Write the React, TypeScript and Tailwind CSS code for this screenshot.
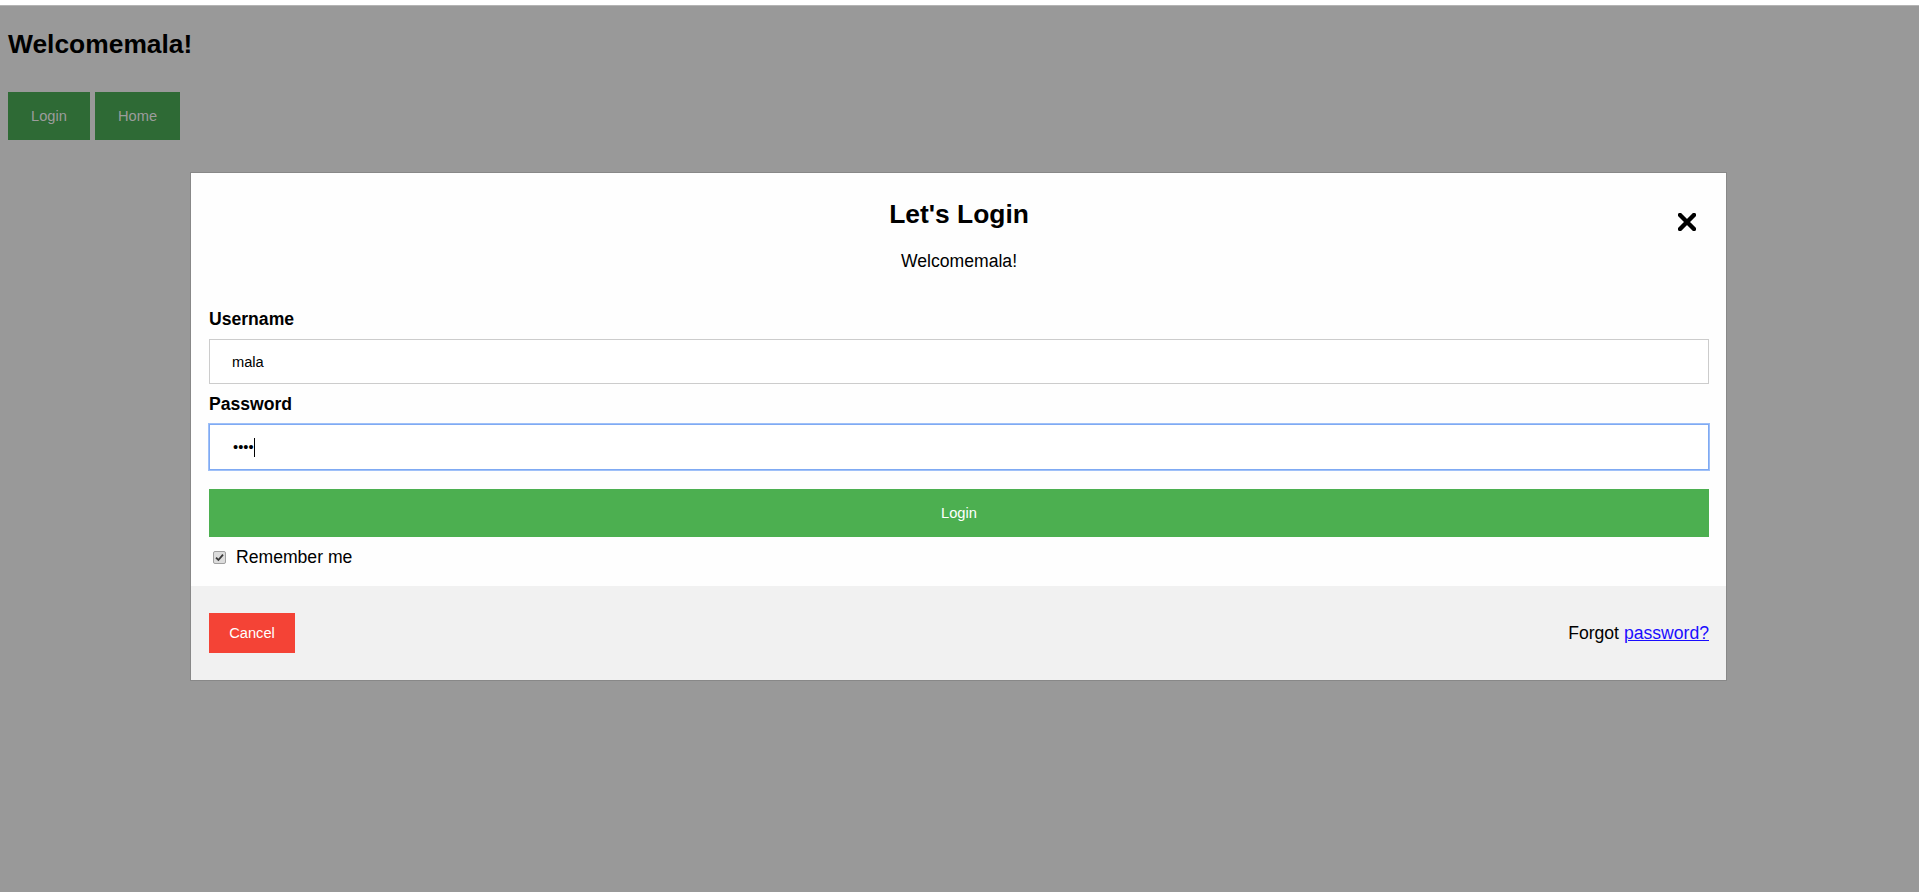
import { useState } from "react";

function CloseIcon() {
    return (
        <svg width="18" height="18" viewBox="0 0 18 18">
            <path d="M2 2 L16 16 M16 2 L2 16" stroke="#000" strokeWidth="4.4" strokeLinecap="square" />
        </svg>
    );
}

function Checkbox() {
    return (
        <span className="ml-[4px] w-[13px] h-[13px] rounded-[2px] border border-[#a0a0a0] bg-[#dcdcdc] flex items-center justify-center">
            <svg width="9" height="9" viewBox="0 0 9 9">
                <path d="M1 4.6 L3.4 7 L8 1.6" stroke="#3a3a3a" strokeWidth="1.8" fill="none" />
            </svg>
        </span>
    );
}

export default function App() {
    const [username] = useState("mala");

    return (
        <div className="min-h-screen flex flex-col bg-white font-['Liberation_Sans',Arial,sans-serif] text-black">
            <div className="h-[6px] bg-white border-b border-[#b4b4b4]"></div>
            <div className="flex-1 bg-[#999999] pt-[23px] px-[8px] pb-[40px]">
                <h1 className="text-[26.4px] leading-[30px] font-bold text-black">Welcome{username}!</h1>
                <div className="mt-[33px] flex gap-[5px]">
                    <button className="w-[82px] h-[48px] bg-[#2e6a35] text-[#9c9c9c] text-[14.67px]">Login</button>
                    <button className="w-[85px] h-[48px] bg-[#2e6a35] text-[#9c9c9c] text-[14.67px]">Home</button>
                </div>

                <div className="relative mt-[32px] ml-[182px] w-[1537px] border border-[#888888] bg-[#fefefe]">
                    <div className="pl-[18px] pr-[17px] pt-[26px]">
                        <h2 className="text-center text-[26.4px] leading-[30px] font-bold">Let's Login</h2>
                        <p className="mt-[22px] text-center text-[17.6px] leading-[20px]">Welcome{username}!</p>
                        <button className="absolute right-[30px] top-[40px]" aria-label="Close">
                            <CloseIcon />
                        </button>

                        <label className="block mt-[38px] text-[17.6px] leading-[20px] font-bold">Username</label>
                        <input
                            readOnly
                            value={username}
                            className="mt-[10px] block w-full h-[45px] border border-[#cccccc] bg-white px-[22px] text-[14.67px] outline-none"
                        />
                        <label className="block mt-[10px] text-[17.6px] leading-[20px] font-bold">Password</label>
                        <div className="mt-[10px] h-[46px] border border-[#7faaf3] shadow-[0_0_0_1px_#9fc0f8] bg-white px-[23px] flex items-center">
                            <span className="text-[14.67px] leading-none">••••</span>
                            <span className="w-[1px] h-[19px] bg-black"></span>
                        </div>

                        <button className="mt-[19px] w-full h-[48px] bg-[#4caf50] text-white text-[14.67px]">Login</button>

                        <div className="mt-[10px] flex items-center h-[20px]">
                            <Checkbox />
                            <span className="ml-[10px] text-[17.6px] leading-[20px]">Remember me</span>
                        </div>
                    </div>

                    <div className="mt-[19px] bg-[#f1f1f1] pl-[18px] pr-[17px] pt-[27px] pb-[27px] flex items-center justify-between">
                        <button className="w-[86px] h-[40px] bg-[#f44336] text-white text-[14.67px]">Cancel</button>
                        <span className="text-[17.6px] leading-[20px]">
                            Forgot <a href="#" className="text-[#1a0dff] underline">password?</a>
                        </span>
                    </div>
                </div>
            </div>
        </div>
    );
}
